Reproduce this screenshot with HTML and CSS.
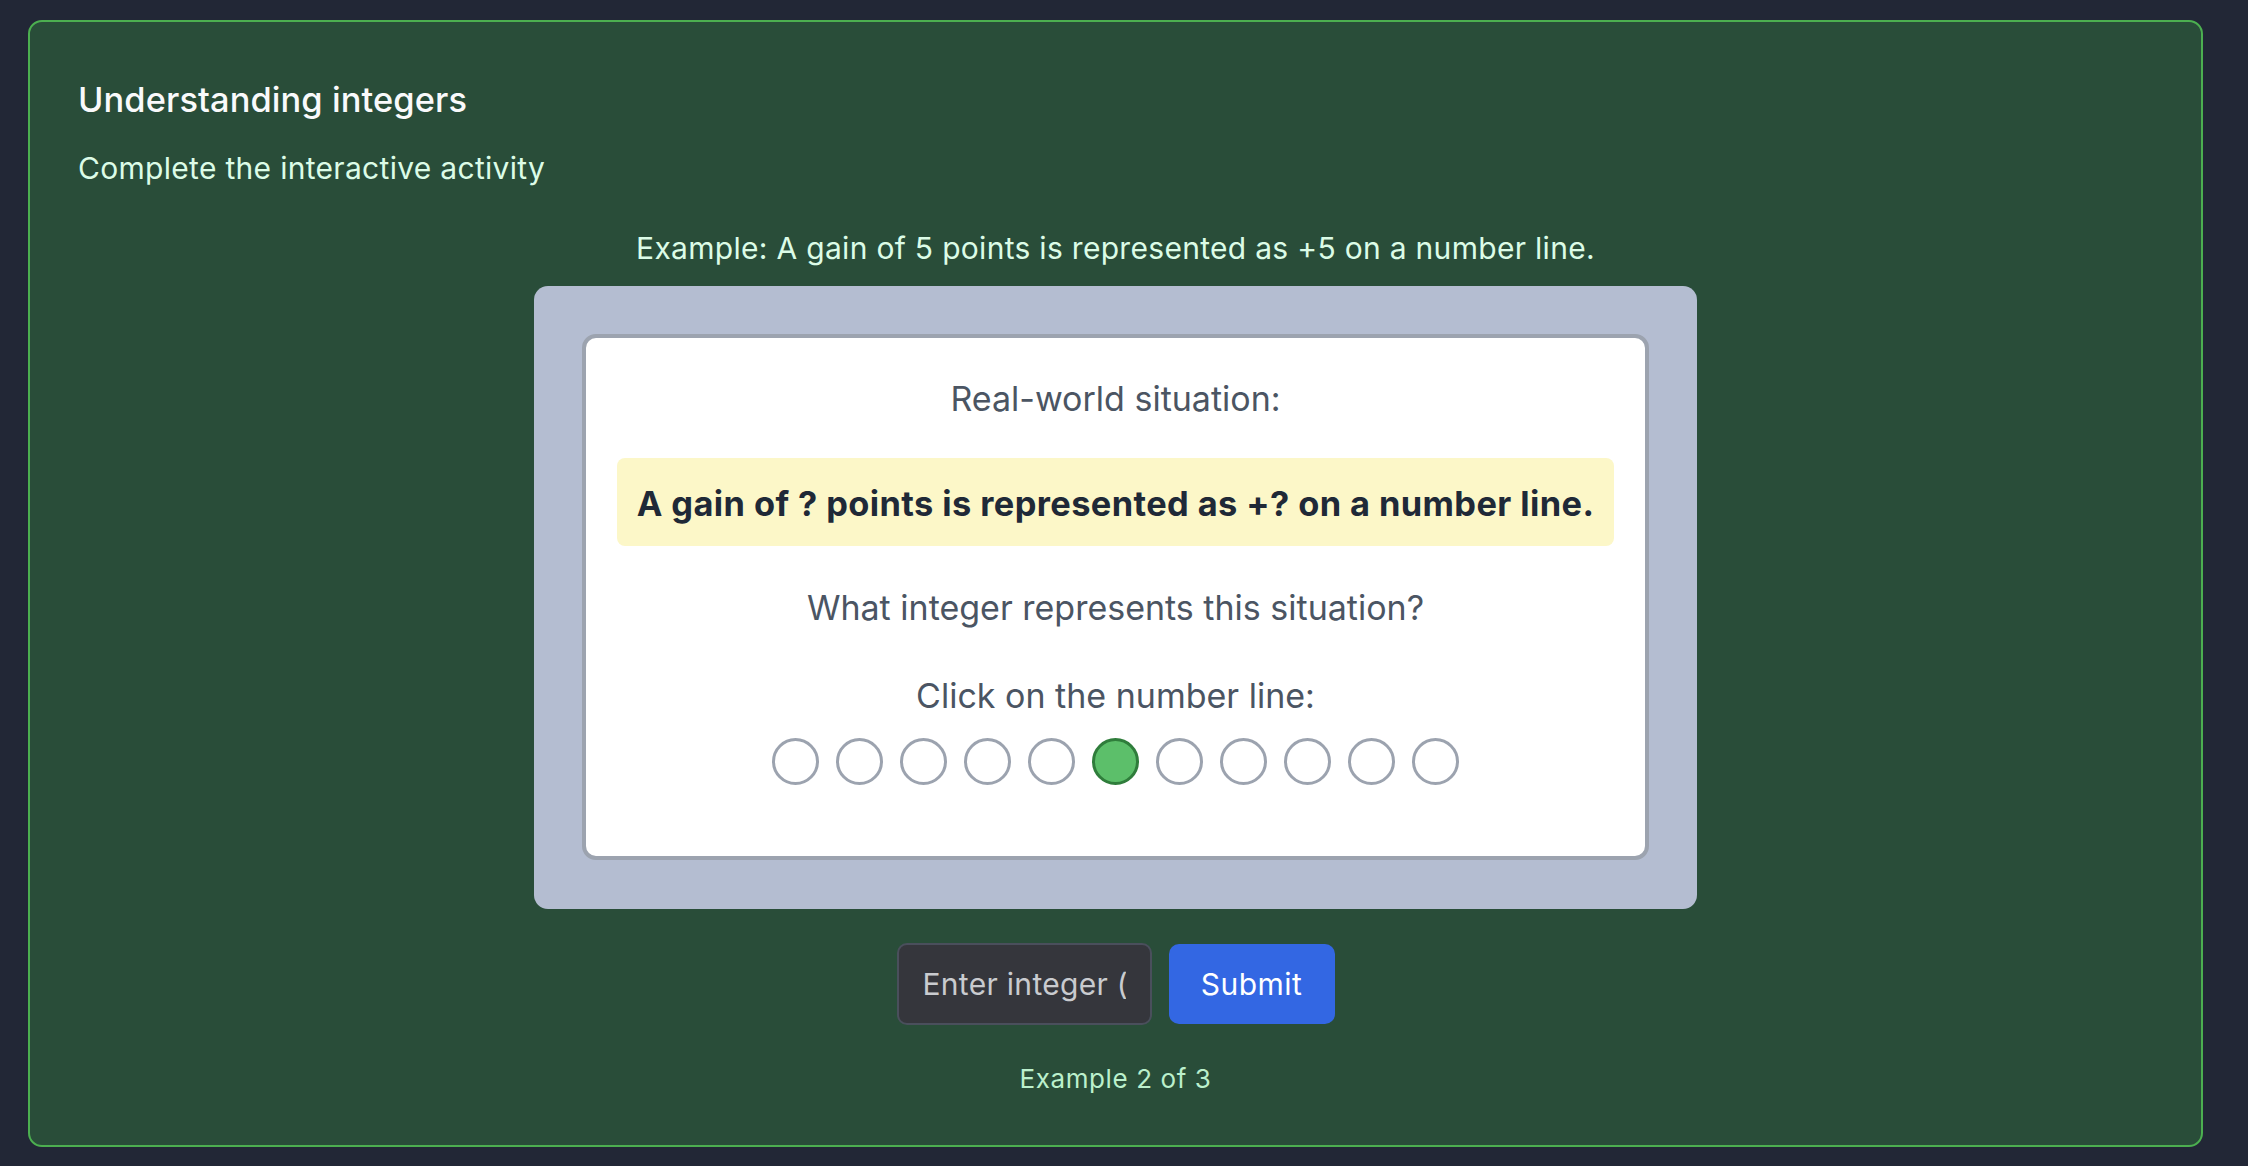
FILE: index.html
```html
<!DOCTYPE html>
<html lang="en">
<head>
<meta charset="utf-8">
<title>Understanding integers</title>
<link rel="stylesheet" href="styles.css">
</head>
<body>
<main class="card">
  <h1 class="title">Understanding integers</h1>
  <p class="subtitle">Complete the interactive activity</p>
  <p class="example">Example: A gain of 5 points is represented as +5 on a number line.</p>
  <section class="panel">
    <div class="sheet">
      <p class="label">Real-world situation:</p>
      <div class="situation">A gain of ? points is represented as +? on a number line.</div>
      <p class="question">What integer represents this situation?</p>
      <p class="prompt">Click on the number line:</p>
      <div class="line">
        <span class="dot"></span>
        <span class="dot"></span>
        <span class="dot"></span>
        <span class="dot"></span>
        <span class="dot"></span>
        <span class="dot dot-active"></span>
        <span class="dot"></span>
        <span class="dot"></span>
        <span class="dot"></span>
        <span class="dot"></span>
        <span class="dot"></span>
      </div>
    </div>
  </section>
  <div class="controls">
    <input class="answer" type="text" placeholder="Enter integer (e.g., +5 or -3)">
    <button class="submit" type="button">Submit</button>
  </div>
  <p class="progress">Example 2 of 3</p>
</main>
</body>
</html>
```

FILE: styles.css
```css
* {
  box-sizing: border-box;
}

html, body {
  margin: 0;
  padding: 0;
}

body {
  background: #222736;
  font-family: "Inter", "Noto Sans", "Liberation Sans", sans-serif;
  padding: 20px 45px 0 28px;
}

.card {
  height: 1127px;
  background: #294d39;
  border: 2px solid #4caf50;
  border-radius: 14px;
  padding: 55px 48px 0;
}

.title {
  margin: 0;
  font-size: 34.4px;
  line-height: 46px;
  font-weight: 500;
  letter-spacing: 0.1px;
  color: #f9fafb;
}

.subtitle {
  margin: 25px 0 0;
  font-size: 30px;
  line-height: 40px;
  letter-spacing: 0.3px;
  color: #dcfce7;
}

.example {
  margin: 40px 0 0;
  font-size: 30px;
  line-height: 40px;
  letter-spacing: 0.3px;
  color: #dcfce7;
  text-align: center;
}

.panel {
  width: 1163px;
  margin: 18px auto 0;
  padding: 48px 48px 49px;
  background: #b4bdd1;
  border-radius: 14px;
}

.sheet {
  background: #ffffff;
  border: 4px solid #9ca3af;
  border-radius: 14px;
  padding: 38px 31px 71px;
  text-align: center;
}

.label,
.question,
.prompt {
  margin: 0;
  font-size: 34px;
  line-height: 46px;
  color: #4b5563;
}

.situation {
  margin-top: 36px;
  height: 88px;
  padding: 26px 8px 22px;
  background: #fcf7c8;
  border-radius: 8px;
  font-size: 34.4px;
  line-height: 40px;
  font-weight: 700;
  letter-spacing: 0.4px;
  color: #1f2937;
  white-space: nowrap;
}

.question {
  margin-top: 39px;
}

.prompt {
  margin-top: 42px;
}

.line {
  margin-top: 19px;
  display: flex;
  justify-content: center;
  gap: 17px;
}

.dot {
  width: 47px;
  height: 47px;
  border-radius: 50%;
  border: 3.5px solid #9ca3af;
  background: #ffffff;
}

.dot-active {
  background: #5cbf6a;
  border-color: #2f7d3b;
}

.controls {
  margin-top: 34px;
  display: flex;
  justify-content: center;
  align-items: center;
  gap: 17px;
}

.answer {
  width: 255px;
  height: 82px;
  padding: 0 24px;
  background: #35363c;
  border: 2px solid #4a4f5c;
  border-radius: 10px;
  font-family: inherit;
  font-size: 30px;
  letter-spacing: 0.3px;
  color: #e5e7eb;
  outline: none;
}

.answer::placeholder {
  color: #c9cbcf;
}

.submit {
  width: 166px;
  height: 80px;
  padding: 0;
  background: #3367e3;
  border: none;
  border-radius: 10px;
  font-family: inherit;
  font-size: 30px;
  letter-spacing: 0.5px;
  color: #ffffff;
}

.progress {
  margin: 36px 0 0;
  font-size: 26px;
  line-height: 36px;
  letter-spacing: 0.6px;
  color: #bbf0cc;
  text-align: center;
}
```
